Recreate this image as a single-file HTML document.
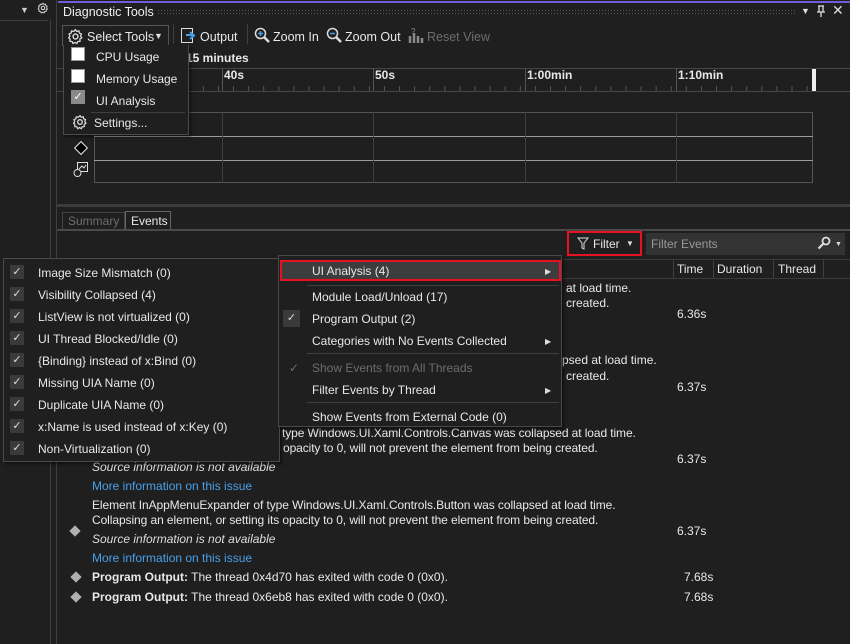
<!DOCTYPE html>
<html><head><meta charset="utf-8"><style>
*{margin:0;padding:0;box-sizing:border-box}
body{width:850px;height:644px;background:#1f1f1f;font-family:"Liberation Sans",sans-serif;font-size:12px;color:#e8e8e8;position:relative;overflow:hidden}
.a{position:absolute}
.t{position:absolute;white-space:nowrap;line-height:16px}
.vl{position:absolute;width:1px;background:#3f3f3f}
.hl{position:absolute;height:1px;background:#3f3f3f}
.menu{position:absolute;background:#1f1f1f;border:1px solid #4a4a4a;box-shadow:2px 2px 3px rgba(0,0,0,.5)}
.cb{position:absolute;width:14px;height:14px;background:#3a3a3a;color:#ddd;font-size:11px;text-align:center;line-height:14px}
.gray{color:#6d6d6d}
.link{color:#4aa0e8}
.dia{position:absolute;width:8px;height:8px;background:#b0b0b0;transform:rotate(45deg)}
</style></head><body>
<svg width="0" height="0" style="position:absolute"><defs><g id="gear"><circle cx="8" cy="8" r="2.3" fill="none" stroke="#ddd" stroke-width="1.3"/><path d="M8 1.5l1.2 1.8 2.1-.6.3 2.1 2 .8-.9 2 1.3 1.7-1.9 1.1.2 2.2-2.1.1-.9 2-1.8-1.2-1.8 1.2-.9-2-2.1-.1.2-2.2L1.5 9.3 2.8 7.6l-.9-2 2-.8.3-2.1 2.1.6z" fill="none" stroke="#ddd" stroke-width="1.2" stroke-linejoin="round"/></g></defs></svg>
<!-- left panel -->
<div class="t" style="left:20px;top:2px;font-size:9px;color:#ccc">▼</div>
<svg class="a" style="left:37px;top:2px" width="12" height="12" viewBox="0 0 16 16"><use href="#gear"/></svg>
<div class="hl" style="left:0;top:20px;width:48px"></div>
<div class="vl" style="left:50px;top:20px;height:624px"></div>
<div class="vl" style="left:56px;top:0;height:644px"></div>
<!-- title -->
<div class="a" style="left:58px;top:1px;width:792px;height:2px;background:#6e5fd6"></div>
<div class="t" style="left:63px;top:4px;font-size:12.5px;color:#f0f0f0">Diagnostic Tools</div>
<div class="a" style="left:157px;top:9px;width:638px;height:5px;background-image:radial-gradient(#555 0.6px,transparent 0.8px);background-size:3px 3px"></div>
<div class="t" style="left:801px;top:3px;font-size:9px;color:#ddd">▼</div>
<svg class="a" style="left:816px;top:5px" width="10" height="12"><path d="M2 1h6M3 1v6h4V1M1 7h8M5 7v5" stroke="#ddd" stroke-width="1.3" fill="none"/></svg>
<div class="t" style="left:832px;top:2px;font-size:14px;color:#ddd">✕</div>
<!-- toolbar -->
<div class="a" style="left:62px;top:25px;width:107px;height:21px;border:1px solid #555;border-bottom:none"></div>
<svg class="a" style="left:67px;top:28px" width="17" height="17" viewBox="0 0 16 16"><use href="#gear"/></svg>
<div class="t" style="left:87px;top:29px;font-size:12.5px">Select Tools</div>
<div class="t" style="left:154px;top:28px;font-size:9px;color:#ddd">▼</div>
<div class="vl" style="left:173px;top:24px;height:20px"></div>
<svg class="a" style="left:180px;top:27px" width="18" height="18"><rect x="1.5" y="1.5" width="11" height="14" fill="none" stroke="#ddd"/><path d="M6 8h7M10 5l4 3.5-4 3.5" stroke="#4aa0e8" stroke-width="2" fill="none"/></svg>
<div class="t" style="left:200px;top:29px;font-size:12.5px">Output</div>
<div class="vl" style="left:247px;top:24px;height:20px"></div>
<svg class="a" style="left:254px;top:27px" width="17" height="17"><circle cx="6.5" cy="6.5" r="5" fill="none" stroke="#ddd" stroke-width="1.5"/><path d="M10 10l5 5" stroke="#ddd" stroke-width="2.5"/><path d="M4 6.5h5M6.5 4v5" stroke="#4aa0e8" stroke-width="1.5"/></svg>
<div class="t" style="left:273px;top:29px;font-size:12.5px">Zoom In</div>
<svg class="a" style="left:326px;top:27px" width="17" height="17"><circle cx="6.5" cy="6.5" r="5" fill="none" stroke="#ddd" stroke-width="1.5"/><path d="M10 10l5 5" stroke="#ddd" stroke-width="2.5"/><path d="M4 6.5h5" stroke="#4aa0e8" stroke-width="1.5"/></svg>
<div class="t" style="left:345px;top:29px;font-size:12.5px">Zoom Out</div>
<svg class="a" style="left:408px;top:27px" width="17" height="17"><path d="M2 16V9M6 16V6M10 16V9M14 16V11" stroke="#888" stroke-width="2.5"/><text x="3" y="7" font-size="8" fill="#888">?</text></svg>
<div class="t gray" style="left:427px;top:29px;font-size:12.5px">Reset View</div>
<div class="t" style="left:186px;top:50px;font-weight:bold">15 minutes</div>
<!-- ruler -->
<div class="hl" style="left:57px;top:68px;width:793px;background:#454545"></div>
<div class="hl" style="left:57px;top:91px;width:793px;background:#454545"></div>
<div class="vl" style="left:222px;top:68px;height:23px;background:#555"></div>
<div class="vl" style="left:373px;top:68px;height:23px;background:#555"></div>
<div class="vl" style="left:525px;top:68px;height:23px;background:#555"></div>
<div class="vl" style="left:676px;top:68px;height:23px;background:#555"></div>
<div class="a" style="left:57px;top:86px;width:760px;height:5px;background-image:linear-gradient(90deg,#555 1px,transparent 1px);background-size:15.1px 5px;background-position:10px 0"></div>
<div class="t" style="left:224px;top:67px;font-weight:bold">40s</div>
<div class="t" style="left:375px;top:67px;font-weight:bold">50s</div>
<div class="t" style="left:527px;top:67px;font-weight:bold">1:00min</div>
<div class="t" style="left:678px;top:67px;font-weight:bold">1:10min</div>
<div class="a" style="left:812px;top:69px;width:4px;height:22px;background:#eee"></div>
<!-- lanes -->
<div class="a" style="left:94px;top:112px;width:719px;height:71px;border:1px solid #555"></div>
<div class="hl" style="left:94px;top:136px;width:719px;background:#9a9a9a"></div>
<div class="hl" style="left:94px;top:160px;width:719px;background:#9a9a9a"></div>
<div class="vl" style="left:222px;top:112px;height:71px"></div>
<div class="vl" style="left:373px;top:112px;height:71px"></div>
<div class="vl" style="left:525px;top:112px;height:71px"></div>
<div class="vl" style="left:676px;top:112px;height:71px"></div>
<div class="a" style="left:76px;top:143px;width:10px;height:10px;border:1.5px solid #eee;background:#000;transform:rotate(45deg)"></div>
<svg class="a" style="left:73px;top:161px" width="17" height="17"><rect x="4.5" y="1.5" width="10" height="9" fill="none" stroke="#ddd"/><path d="M6 8l3-3 2 2 2-3" stroke="#ddd" fill="none"/><circle cx="4.5" cy="12" r="3.5" fill="#1f1f1f" stroke="#ddd"/></svg>
<!-- splitter -->
<div class="a" style="left:57px;top:204px;width:793px;height:3px;background:#3c3c3c"></div>
<!-- tabs -->
<div class="a" style="left:62px;top:212px;width:63px;height:18px;border:1px solid #444"></div>
<div class="t gray" style="left:68px;top:213px">Summary</div>
<div class="a" style="left:125px;top:211px;width:46px;height:19px;border:1px solid #666;border-bottom:none"></div>
<div class="t" style="left:131px;top:213px">Events</div>
<div class="a" style="left:57px;top:229px;width:793px;height:2px;background:#4a4a4a"></div>
<!-- filter -->
<div class="a" style="left:567px;top:231px;width:75px;height:25px;border:2px solid #e81123"></div>
<svg class="a" style="left:577px;top:237px" width="12" height="13"><path d="M1 1h10L7 6v6L5 11V6z" fill="none" stroke="#ddd"/></svg>
<div class="t" style="left:593px;top:236px">Filter</div>
<div class="t" style="left:626px;top:236px;font-size:8px;color:#ddd">▼</div>
<div class="a" style="left:646px;top:233px;width:199px;height:22px;background:#333"></div>
<div class="t" style="left:651px;top:236px;color:#999">Filter Events</div>
<svg class="a" style="left:817px;top:236px" width="14" height="14"><circle cx="9" cy="5" r="3.5" fill="none" stroke="#ddd" stroke-width="1.8"/><path d="M6.5 7.5L1.5 12.5" stroke="#ddd" stroke-width="2.2"/></svg>
<div class="t" style="left:835px;top:237px;font-size:7px;color:#ddd">▼</div>
<!-- columns -->
<div class="hl" style="left:560px;top:259px;width:290px;background:#3a3a3a"></div>
<div class="hl" style="left:560px;top:278px;width:290px;background:#3a3a3a"></div>
<div class="vl" style="left:673px;top:259px;height:19px"></div>
<div class="vl" style="left:713px;top:259px;height:19px"></div>
<div class="vl" style="left:773px;top:259px;height:19px"></div>
<div class="vl" style="left:823px;top:259px;height:19px"></div>
<div class="t" style="left:677px;top:261px">Time</div>
<div class="t" style="left:717px;top:261px">Duration</div>
<div class="t" style="left:778px;top:261px">Thread</div>
<!-- events -->
<div class="t" style="left:566px;top:280px">at load time.</div>
<div class="t" style="left:566px;top:295px">created.</div>
<div class="t" style="left:677px;top:306px">6.36s</div>
<div class="t" style="left:562px;top:352px">psed at load time.</div>
<div class="t" style="left:566px;top:368px">created.</div>
<div class="t" style="left:677px;top:379px">6.37s</div>
<div class="t" style="left:282px;top:425px;letter-spacing:-0.1px">type Windows.UI.Xaml.Controls.Canvas was collapsed at load time.</div>
<div class="t" style="left:283px;top:440px;letter-spacing:-0.1px">opacity to 0, will not prevent the element from being created.</div>
<div class="t" style="left:677px;top:451px">6.37s</div>
<div class="t" style="left:92px;top:459px;font-style:italic;color:#ddd">Source information is not available</div>
<div class="t link" style="left:92px;top:478px">More information on this issue</div>
<div class="t" style="left:92px;top:497px;letter-spacing:-0.08px">Element InAppMenuExpander of type Windows.UI.Xaml.Controls.Button was collapsed at load time.</div>
<div class="t" style="left:92px;top:512px;letter-spacing:-0.08px">Collapsing an element, or setting its opacity to 0, will not prevent the element from being created.</div>
<div class="dia" style="left:71px;top:527px"></div>
<div class="t" style="left:677px;top:523px">6.37s</div>
<div class="t" style="left:92px;top:531px;font-style:italic;color:#ddd">Source information is not available</div>
<div class="t link" style="left:92px;top:550px">More information on this issue</div>
<div class="dia" style="left:72px;top:573px"></div>
<div class="t" style="left:92px;top:569px"><b>Program Output:</b> The thread 0x4d70 has exited with code 0 (0x0).</div>
<div class="t" style="left:684px;top:569px">7.68s</div>
<div class="dia" style="left:72px;top:593px"></div>
<div class="t" style="left:92px;top:589px"><b>Program Output:</b> The thread 0x6eb8 has exited with code 0 (0x0).</div>
<div class="t" style="left:684px;top:589px">7.68s</div>
<!-- select tools dropdown -->
<div class="menu" style="left:63px;top:45px;width:126px;height:90px;border-top:none">
<div class="a" style="left:7px;top:2px;width:14px;height:14px;background:#fff;border:1px solid #999"></div>
<div class="t" style="left:32px;top:4px">CPU Usage</div>
<div class="a" style="left:7px;top:24px;width:14px;height:14px;background:#fff;border:1px solid #999"></div>
<div class="t" style="left:32px;top:26px">Memory Usage</div>
<div class="cb" style="left:7px;top:45px;background:#8a8a8a;color:#fff">✓</div>
<div class="t" style="left:32px;top:48px">UI Analysis</div>
<div class="hl" style="left:27px;top:67px;width:94px"></div>
<svg class="a" style="left:8px;top:69px" width="16" height="16" viewBox="0 0 16 16"><use href="#gear"/></svg>
<div class="t" style="left:30px;top:70px">Settings...</div>
</div>
<!-- left submenu -->
<div class="menu" style="left:3px;top:258px;width:277px;height:204px">
<div class="cb" style="left:6px;top:6px">✓</div><div class="t" style="left:34px;top:6px">Image Size Mismatch (0)</div>
<div class="cb" style="left:6px;top:28px">✓</div><div class="t" style="left:34px;top:28px">Visibility Collapsed (4)</div>
<div class="cb" style="left:6px;top:50px">✓</div><div class="t" style="left:34px;top:50px">ListView is not virtualized (0)</div>
<div class="cb" style="left:6px;top:72px">✓</div><div class="t" style="left:34px;top:72px">UI Thread Blocked/Idle (0)</div>
<div class="cb" style="left:6px;top:94px">✓</div><div class="t" style="left:34px;top:94px">{Binding} instead of x:Bind (0)</div>
<div class="cb" style="left:6px;top:116px">✓</div><div class="t" style="left:34px;top:116px">Missing UIA Name (0)</div>
<div class="cb" style="left:6px;top:138px">✓</div><div class="t" style="left:34px;top:138px">Duplicate UIA Name (0)</div>
<div class="cb" style="left:6px;top:160px">✓</div><div class="t" style="left:34px;top:160px">x:Name is used instead of x:Key (0)</div>
<div class="cb" style="left:6px;top:182px">✓</div><div class="t" style="left:34px;top:182px">Non-Virtualization (0)</div>
</div>
<!-- right menu -->
<div class="menu" style="left:278px;top:255px;width:284px;height:172px">
<div class="a" style="left:1px;top:4px;width:281px;height:21px;background:#3d3d3d;border:2px solid #e81123"></div>
<div class="t" style="left:33px;top:7px">UI Analysis (4)</div>
<div class="t" style="left:266px;top:8px;font-size:8px;color:#ddd">▶</div>
<div class="hl" style="left:28px;top:29px;width:252px"></div>
<div class="t" style="left:33px;top:33px">Module Load/Unload (17)</div>
<div class="cb" style="left:4px;top:54px;width:17px;height:17px;line-height:17px">✓</div>
<div class="t" style="left:33px;top:55px">Program Output (2)</div>
<div class="t" style="left:33px;top:77px">Categories with No Events Collected</div>
<div class="t" style="left:266px;top:78px;font-size:8px;color:#ddd">▶</div>
<div class="hl" style="left:28px;top:97px;width:252px"></div>
<div class="t gray" style="left:10px;top:104px">✓</div>
<div class="t gray" style="left:33px;top:104px">Show Events from All Threads</div>
<div class="t" style="left:33px;top:126px">Filter Events by Thread</div>
<div class="t" style="left:266px;top:127px;font-size:8px;color:#ddd">▶</div>
<div class="hl" style="left:28px;top:146px;width:252px"></div>
<div class="t" style="left:33px;top:153px">Show Events from External Code (0)</div>
</div>
</body></html>
